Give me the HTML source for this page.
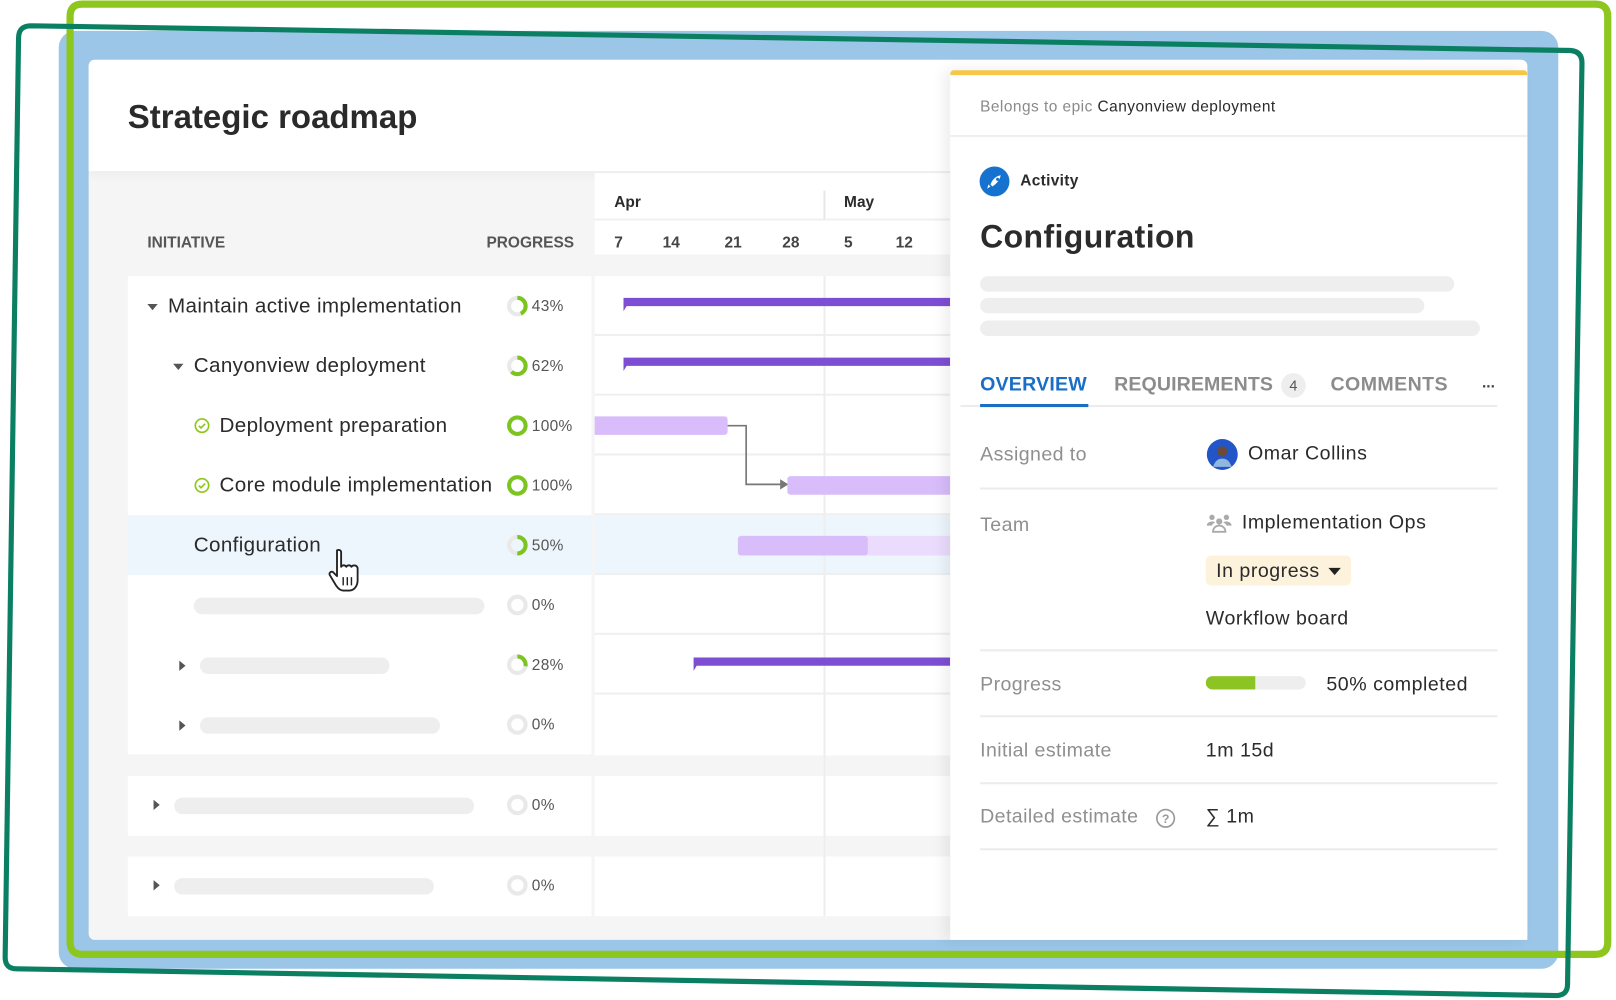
<!DOCTYPE html>
<html><head><meta charset="utf-8"><style>
*{box-sizing:border-box;margin:0;padding:0}
body{width:1616px;height:1000px;overflow:hidden;background:#fff;font-family:"Liberation Sans",sans-serif;}
#w{position:absolute;left:0;top:0;width:1568px;height:970px;transform:scale(1.0306);transform-origin:0 0;}
.a{position:absolute}
.t{position:absolute;white-space:nowrap;color:#2b2b2b}
.rt{font-size:20px;letter-spacing:0.35px}
.row{position:absolute;left:124px;width:450px;height:58px;background:#fff}
.g{position:absolute;left:577px;width:345px;height:58px;background:#fff;border-bottom:2px solid #efefef}
.sk{position:absolute;height:16px;border-radius:8px;background:#eeeeee}
.pct{position:absolute;font-size:15px;color:#555;letter-spacing:0.3px}
.lbl{position:absolute;left:951px;font-size:19px;color:#8f8f8f;white-space:nowrap;letter-spacing:0.4px}
.val{position:absolute;left:1170px;font-size:19px;color:#2b2b2b;white-space:nowrap;letter-spacing:0.5px}
.hl{position:absolute;left:951px;width:502px;height:2px;background:#ececec}
.tri{position:absolute;width:0;height:0;border-left:5px solid transparent;border-right:5px solid transparent;border-top:6px solid #555}
.trr{position:absolute;width:0;height:0;border-top:5px solid transparent;border-bottom:5px solid transparent;border-left:6px solid #555}
</style></head><body><div id="w">
<div class="a" style="left:57px;top:30px;width:1455px;height:910px;background:#9bc6e8;border-radius:16px"></div>
<svg class="a" style="left:0;top:0" width="1568" height="970">
<path d="M80 4 H1548 Q1560 4 1560 16 V914 Q1560 926 1548 926 H80 Q68 926 68 914 V16 Q68 4 80 4Z" fill="none" stroke="#8dc71e" stroke-width="7"/>
<path d="M30 25 L1524 49 Q1535 50 1535 61 L1521 955 Q1521 966 1510 966 L16 940 Q5 940 5 929 L18 37 Q18 25 30 25Z" fill="none" stroke="#0b7f62" stroke-width="5"/>
</svg>
<div class="a" style="left:86px;top:58px;width:1396px;height:854px;background:#f5f5f5;border-radius:6px;overflow:hidden">
<div class="a" style="left:0;top:0;width:1396px;height:108px;background:#fff;box-shadow:0 4px 10px rgba(0,0,0,.04)"></div>
</div>
<div class="t" style="left:124px;top:95px;font-size:32px;font-weight:bold;color:#2a2a2a">Strategic roadmap</div>
<div class="t" style="left:143px;top:227px;font-size:15px;font-weight:bold;color:#555">INITIATIVE</div>
<div class="t" style="left:472px;top:227px;font-size:15px;font-weight:bold;color:#555">PROGRESS</div>
<div class="a" style="left:577px;top:168px;width:345px;height:79px;background:#fff"></div>
<div class="a" style="left:577px;top:212px;width:345px;height:2px;background:#f0f0f0"></div>
<div class="a" style="left:799px;top:185px;width:2px;height:28px;background:#e8e8e8"></div>
<div class="t" style="left:596px;top:188px;font-size:15px;font-weight:bold">Apr</div>
<div class="t" style="left:819px;top:188px;font-size:15px;font-weight:bold">May</div>
<div class="t" style="left:596px;top:227px;font-size:15px;font-weight:bold;color:#444">7</div>
<div class="t" style="left:643px;top:227px;font-size:15px;font-weight:bold;color:#444">14</div>
<div class="t" style="left:703px;top:227px;font-size:15px;font-weight:bold;color:#444">21</div>
<div class="t" style="left:759px;top:227px;font-size:15px;font-weight:bold;color:#444">28</div>
<div class="t" style="left:819px;top:227px;font-size:15px;font-weight:bold;color:#444">5</div>
<div class="t" style="left:869px;top:227px;font-size:15px;font-weight:bold;color:#444">12</div>
<div class="row" style="top:268px"></div><div class="row" style="top:326px"></div><div class="row" style="top:384px"></div><div class="row" style="top:442px"></div>
<div class="row" style="top:500px;background:#eef6fd"></div><div class="row" style="top:558px"></div><div class="row" style="top:616px"></div><div class="row" style="top:674px"></div>
<div class="row" style="top:753px"></div><div class="row" style="top:831px"></div>
<div class="g" style="top:268px"></div><div class="g" style="top:326px"></div><div class="g" style="top:384px"></div><div class="g" style="top:442px"></div>
<div class="g" style="top:500px;background:#eef6fd"></div><div class="g" style="top:558px"></div><div class="g" style="top:616px"></div><div class="g" style="top:674px;border:0;height:59px"></div>
<div class="g" style="top:753px;border:0"></div><div class="g" style="top:831px;border:0"></div>
<div class="a" style="left:799px;top:268px;width:2px;height:621px;background:#eeeeee"></div>
<div class="tri" style="left:143px;top:295px"></div>
<div class="t rt" style="left:163px;top:286px">Maintain active implementation</div>
<div class="tri" style="left:168px;top:353px"></div>
<div class="t rt" style="left:188px;top:344px">Canyonview deployment</div>
<svg class="a" style="left:187px;top:404px" width="18" height="18"><circle cx="9" cy="9" r="6.5" fill="none" stroke="#8dc71e" stroke-width="1.6"/><path d="M6 9.2l2 2 4-4" fill="none" stroke="#8dc71e" stroke-width="1.6"/></svg>
<div class="t rt" style="left:213px;top:402px">Deployment preparation</div>
<svg class="a" style="left:187px;top:462px" width="18" height="18"><circle cx="9" cy="9" r="6.5" fill="none" stroke="#8dc71e" stroke-width="1.6"/><path d="M6 9.2l2 2 4-4" fill="none" stroke="#8dc71e" stroke-width="1.6"/></svg>
<div class="t rt" style="left:213px;top:460px">Core module implementation</div>
<div class="t rt" style="left:188px;top:518px">Configuration</div>
<div class="sk" style="left:188px;top:580px;width:282px"></div>
<div class="trr" style="left:174px;top:641px"></div><div class="sk" style="left:194px;top:638px;width:184px"></div>
<div class="trr" style="left:174px;top:699px"></div><div class="sk" style="left:194px;top:696px;width:233px"></div>
<div class="trr" style="left:149px;top:776px"></div><div class="sk" style="left:169px;top:774px;width:291px"></div>
<div class="trr" style="left:149px;top:854px"></div><div class="sk" style="left:169px;top:852px;width:252px"></div>
<svg class="a" style="left:490px;top:280px" width="30" height="600">
<g fill="none" stroke-width="4">
<circle cx="12" cy="17" r="8" stroke="#e9e9e9"/><circle cx="12" cy="17" r="8" stroke="#7cc420" stroke-dasharray="21.6 50" transform="rotate(-90 12 17)"/>
<circle cx="12" cy="75" r="8" stroke="#e9e9e9"/><circle cx="12" cy="75" r="8" stroke="#7cc420" stroke-dasharray="31.2 50" transform="rotate(-90 12 75)"/>
<circle cx="12" cy="133" r="8" stroke="#7cc420"/>
<circle cx="12" cy="191" r="8" stroke="#7cc420"/>
<circle cx="12" cy="249" r="8" stroke="#e9e9e9"/><circle cx="12" cy="249" r="8" stroke="#7cc420" stroke-dasharray="25.1 50" transform="rotate(-90 12 249)"/>
<circle cx="12" cy="307" r="8" stroke="#e9e9e9"/>
<circle cx="12" cy="365" r="8" stroke="#e9e9e9"/><circle cx="12" cy="365" r="8" stroke="#7cc420" stroke-dasharray="14 50" transform="rotate(-90 12 365)"/>
<circle cx="12" cy="423" r="8" stroke="#e9e9e9"/>
<circle cx="12" cy="501" r="8" stroke="#e9e9e9"/>
<circle cx="12" cy="579" r="8" stroke="#e9e9e9"/>
</g></svg>
<div class="pct" style="left:516px;top:289px">43%</div>
<div class="pct" style="left:516px;top:347px">62%</div>
<div class="pct" style="left:516px;top:405px">100%</div>
<div class="pct" style="left:516px;top:463px">100%</div>
<div class="pct" style="left:516px;top:521px">50%</div>
<div class="pct" style="left:516px;top:579px">0%</div>
<div class="pct" style="left:516px;top:637px">28%</div>
<div class="pct" style="left:516px;top:695px">0%</div>
<div class="pct" style="left:516px;top:773px">0%</div>
<div class="pct" style="left:516px;top:851px">0%</div>
<svg class="a" style="left:577px;top:268px" width="345" height="400">
<path d="M28 21 H345 V29 H31 L28 34Z" fill="#7d4ed4"/>
<path d="M28 79 H345 V87 H31 L28 92Z" fill="#7d4ed4"/>
<rect x="-5" y="136" width="134" height="18" rx="3" fill="#d8bdfa"/>
<path d="M129 145 H147 V202 H182" fill="none" stroke="#777" stroke-width="1.6"/><path d="M180 197 L188 202 L180 207Z" fill="#777"/>
<rect x="187" y="194" width="170" height="18" rx="3" fill="#d8bdfa"/>
<rect x="139" y="252" width="220" height="19" rx="3" fill="#ebdcfd"/>
<rect x="139" y="252" width="126" height="19" rx="3" fill="#d8bdfa"/>
<path d="M96 370 H345 V378 H99 L96 383Z" fill="#7d4ed4"/>
</svg>
<svg class="a" style="left:318px;top:530px" width="40" height="48" viewBox="0 0 40 48"><path d="M9 4c2-1 4 0 4 2v14c1-2 4-2 5 0 1-2 4-2 5 0 1-2 5-2 6 1v12c0 5-3 10-8 10h-6c-3 0-5-2-7-5L2 28c-1-2 1-4 3-3l4 4V6z" fill="#fff" stroke="#222" stroke-width="1.8" stroke-linejoin="round"/><path d="M15 30v8M19 30v8M23 30v8" stroke="#222" stroke-width="1.4"/></svg>
<div class="a" style="left:922px;top:68px;width:560px;height:844px;background:#fff;box-shadow:-6px 0 14px rgba(0,0,0,.07);border-top:5px solid #f7c548;border-radius:4px 4px 0 0"></div>
<div class="t" style="left:951px;top:95px;font-size:15px;color:#8a8a8a;letter-spacing:0.45px">Belongs to epic <span style="color:#2b2b2b">Canyonview deployment</span></div>
<div class="a" style="left:922px;top:131px;width:560px;height:2px;background:#efefef"></div>
<svg class="a" style="left:950px;top:161px" width="30" height="30"><circle cx="15" cy="15" r="14.5" fill="#1572cf"/><path d="M13 20l-2-2c2-5 5-8 10-9-1 5-4 8-8 11z" fill="#fff"/><circle cx="18" cy="13" r="1.5" fill="#1572cf"/><path d="M9 18l2 2-3 2z" fill="#fff"/></svg>
<div class="t" style="left:990px;top:167px;font-size:15px;font-weight:bold;letter-spacing:0.3px">Activity</div>
<div class="t" style="left:951px;top:212px;font-size:31px;font-weight:bold;letter-spacing:0.4px">Configuration</div>
<div class="sk" style="left:951px;top:268px;width:460px;height:15px"></div>
<div class="sk" style="left:951px;top:289px;width:431px;height:15px"></div>
<div class="sk" style="left:951px;top:311px;width:485px;height:15px"></div>
<div class="t" style="left:951px;top:363px;font-size:19px;font-weight:bold;color:#1a6ec6;letter-spacing:0.2px">OVERVIEW</div>
<div class="t" style="left:1081px;top:363px;font-size:19px;font-weight:bold;color:#8c8c8c;letter-spacing:0.1px">REQUIREMENTS</div>
<div class="a" style="left:1243px;top:362px;width:24px;height:24px;border-radius:12px;background:#eeeeee;font-size:14px;color:#555;text-align:center;line-height:24px">4</div>
<div class="t" style="left:1291px;top:363px;font-size:19px;font-weight:bold;color:#8c8c8c;letter-spacing:0.4px">COMMENTS</div>
<div class="t" style="left:1438px;top:363px;font-size:15px;font-weight:bold;color:#444">...</div>
<div class="a" style="left:932px;top:393px;width:521px;height:2px;background:#ececec"></div>
<div class="a" style="left:951px;top:392px;width:105px;height:3px;background:#1a6ec6"></div>
<div class="lbl" style="top:431px">Assigned to</div>
<svg class="a" style="left:1170px;top:425px" width="32" height="32"><circle cx="16" cy="16" r="15" fill="#2255c8"/><circle cx="16" cy="13" r="5" fill="#6b4a3a"/><path d="M7 28c2-6 5-8 9-8s7 2 9 8z" fill="#8fb7e0"/></svg>
<div class="val" style="left:1211px;top:430px">Omar Collins</div>
<div class="hl" style="top:473px"></div>
<div class="lbl" style="top:499px">Team</div>
<svg class="a" style="left:1170px;top:498px" width="26" height="20" fill="#aaa"><circle cx="6" cy="4" r="2.6"/><circle cx="20" cy="4" r="2.6"/><circle cx="13" cy="8" r="3"/><path d="M1 12c0-3 3-4 5-4 1 0 2 0 3 1-2 1-3 2-3 3z"/><path d="M25 12c0-3-3-4-5-4-1 0-2 0-3 1 2 1 3 2 3 3z"/><path d="M7 18c0-4 3-6 6-6s6 2 6 6z" fill="none" stroke="#aaa" stroke-width="1.8"/></svg>
<div class="val" style="left:1205px;top:497px">Implementation Ops</div>
<div class="a" style="left:1170px;top:539px;width:141px;height:29px;border-radius:5px;background:#fdf2dc"></div>
<div class="val" style="left:1180px;top:544px">In progress</div>
<div class="tri" style="left:1289px;top:551px;border-top-color:#222;border-left-width:6px;border-right-width:6px;border-top-width:7px"></div>
<div class="val" style="top:590px">Workflow board</div>
<div class="hl" style="top:630px"></div>
<div class="lbl" style="top:654px">Progress</div>
<div class="a" style="left:1170px;top:656px;width:97px;height:13px;border-radius:7px;background:#eeeeee;overflow:hidden"><div style="width:48px;height:13px;background:#8cc523"></div></div>
<div class="val" style="left:1287px;top:654px">50% completed</div>
<div class="hl" style="top:694px"></div>
<div class="lbl" style="top:718px">Initial estimate</div>
<div class="val" style="top:718px">1m 15d</div>
<div class="hl" style="top:759px"></div>
<div class="lbl" style="top:782px">Detailed estimate</div>
<svg class="a" style="left:1121px;top:784px" width="20" height="20"><circle cx="10" cy="10" r="8.5" fill="none" stroke="#999" stroke-width="1.6"/><text x="10" y="14.5" font-size="12" text-anchor="middle" fill="#999" font-family="Liberation Sans" font-weight="bold">?</text></svg>
<div class="val" style="top:782px">∑ 1m</div>
<div class="hl" style="top:823px"></div>
</div></body></html>
